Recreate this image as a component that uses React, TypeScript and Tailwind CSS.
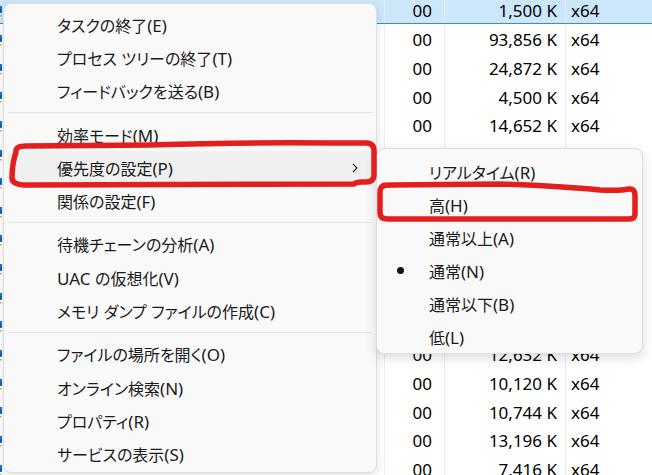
import React from "react";

const rows = [
  "1,500 K",
  "93,856 K",
  "24,872 K",
  "4,500 K",
  "14,652 K",
  "2,316 K",
  "8,204 K",
  "5,880 K",
  "31,420 K",
  "6,112 K",
  "3,948 K",
  "19,532 K",
  "12,632 K",
  "10,120 K",
  "10,744 K",
  "13,196 K",
  "7,416 K",
];

function Label({ text }: { text: string }) {
  const parts = text.match(/[\x00-\x7F]+|[^\x00-\x7F]+/g) || [];
  return (
    <span className="leading-none whitespace-nowrap pt-[1px]">
      {parts.map((p, i) =>
        /^[\x00-\x7F]+$/.test(p) ? (
          <span key={i} className="text-[17px]">
            {p}
          </span>
        ) : (
          <span key={i} className="text-[16px] [font-feature-settings:'palt']">
            {p}
          </span>
        )
      )}
    </span>
  );
}

function RowIcon() {
  return (
    <svg width="16" height="16" viewBox="0 0 16 16" className="ml-[-13px] shrink-0">
      <rect x="4" y="3" width="11" height="7" fill="#1a73d9" />
      <rect x="13" y="6" width="2" height="3" fill="#0a5fc4" />
      <rect x="13" y="12" width="1.5" height="1.5" fill="#e8a33c" />
    </svg>
  );
}

function TableRow({ mem, index }: { mem: string; index: number }) {
  const selected = index === 0;
  return (
    <div
      className={
        selected
          ? "flex h-[28.65px] shrink-0 bg-[#cce6fa] border-b border-[#3b8ad8] text-[17px] text-black"
          : "flex h-[28.65px] shrink-0 text-[17px] text-black"
      }
    >
      <div className="w-[384px] flex items-center pt-[4px]">
        <RowIcon />
      </div>
      <div className="w-[60px] border-l border-[#e6eef6] flex items-center justify-end pr-[12px] pt-[4px]">
        00
      </div>
      <div className="w-[121px] border-l border-[#e6eef6] flex items-center justify-end pr-[8px] pt-[4px]">
        {mem}
      </div>
      <div className="flex-1 border-l border-[#e6eef6] flex items-center pl-[5px] pt-[4px]">
        x64
      </div>
    </div>
  );
}

function Chevron() {
  return (
    <svg width="8" height="10" viewBox="0 0 8 10" className="shrink-0">
      <path d="M2 1 L6 5 L2 9" fill="none" stroke="#1a1a1a" strokeWidth="1.1" />
    </svg>
  );
}

function MenuItem({ label, active, sub }: { label: string; active?: boolean; sub?: boolean }) {
  return (
    <div
      className={
        active
          ? "mx-[4px] h-[33.3px] shrink-0 flex items-center justify-between pl-[49px] pr-[13px] rounded-[4px] bg-[#f0f0f0]"
          : "mx-[4px] h-[33.3px] shrink-0 flex items-center justify-between pl-[49px] pr-[13px] rounded-[4px]"
      }
    >
      <Label text={label} />
      {sub ? <Chevron /> : null}
    </div>
  );
}

function Sep() {
  return <div className="mx-[4px] my-[4.5px] h-px shrink-0 bg-[#e3e3e3]" />;
}

function SubItem({ label, checked }: { label: string; checked?: boolean }) {
  return (
    <div className="mx-[4px] h-[33px] shrink-0 flex items-center rounded-[4px]">
      <div className="w-[48px] flex items-center">
        {checked ? <div className="ml-[16px] w-[7px] h-[7px] rounded-full bg-[#111]" /> : null}
      </div>
      <Label text={label} />
    </div>
  );
}

export default function App() {
  return (
    <div className="relative w-[652px] h-[475px] overflow-hidden bg-white font-['Noto_Sans','Noto_Sans_CJK_JP',sans-serif]">
      {/* background table */}
      <div className="flex flex-col mt-[-5px]">
        {rows.map((m, i) => (
          <TableRow key={i} mem={m} index={i} />
        ))}
      </div>

      {/* main context menu */}
      <div className="absolute left-[3px] top-[3px] w-[374px] h-[470px] rounded-[8px] border border-[#dedede] bg-[#f9f9f9] pt-[4px] flex flex-col text-[16px] text-[#1a1a1a] shadow-[0_3px_10px_rgba(0,0,0,0.12)]">
        <MenuItem label="タスクの終了(E)" />
        <MenuItem label="プロセス ツリーの終了(T)" />
        <MenuItem label="フィードバックを送る(B)" />
        <Sep />
        <MenuItem label="効率モード(M)" />
        <MenuItem label="優先度の設定(P)" active sub />
        <MenuItem label="関係の設定(F)" />
        <Sep />
        <MenuItem label="待機チェーンの分析(A)" />
        <MenuItem label="UAC の仮想化(V)" />
        <MenuItem label="メモリ ダンプ ファイルの作成(C)" />
        <Sep />
        <MenuItem label="ファイルの場所を開く(O)" />
        <MenuItem label="オンライン検索(N)" />
        <MenuItem label="プロパティ(R)" />
        <MenuItem label="サービスの表示(S)" />
      </div>

      {/* submenu */}
      <div className="absolute left-[376px] top-[148px] w-[267px] h-[206px] rounded-[8px] border border-[#dedede] bg-[#f9f9f9] pt-[6px] flex flex-col text-[16px] text-[#1a1a1a] shadow-[0_4px_12px_rgba(0,0,0,0.14)]">
        <SubItem label="リアルタイム(R)" />
        <SubItem label="高(H)" />
        <SubItem label="通常以上(A)" />
        <SubItem label="通常(N)" checked />
        <SubItem label="通常以下(B)" />
        <SubItem label="低(L)" />
      </div>

      {/* red hand-drawn annotations */}
      <svg
        className="absolute left-0 top-0 pointer-events-none"
        width="652"
        height="475"
        viewBox="0 0 652 475"
      >
        <path
          d="M16 152 Q15 146 26 146 L150 145 Q250 142 330 143 L366 143 Q374 143 374 151 L374 175 Q374 182 366 182 L362 182 Q356 182 354 184 L32 185 Q12 186 12 178 Q12 164 16 152 Z"
          fill="none"
          stroke="#e41d1d"
          strokeWidth="5.5"
          strokeLinejoin="round"
          strokeLinecap="round"
        />
        <path
          d="M384 186 Q381 185 392 185 L500 184 Q560 186 600 190 Q620 191 629 189 Q635 188 635 196 L635 214 Q635 219 629 219 L388 219 Q380 219 380 213 L380 193 Q380 186 384 186 Z"
          fill="none"
          stroke="#e41d1d"
          strokeWidth="5.5"
          strokeLinejoin="round"
          strokeLinecap="round"
        />
      </svg>
    </div>
  );
}
